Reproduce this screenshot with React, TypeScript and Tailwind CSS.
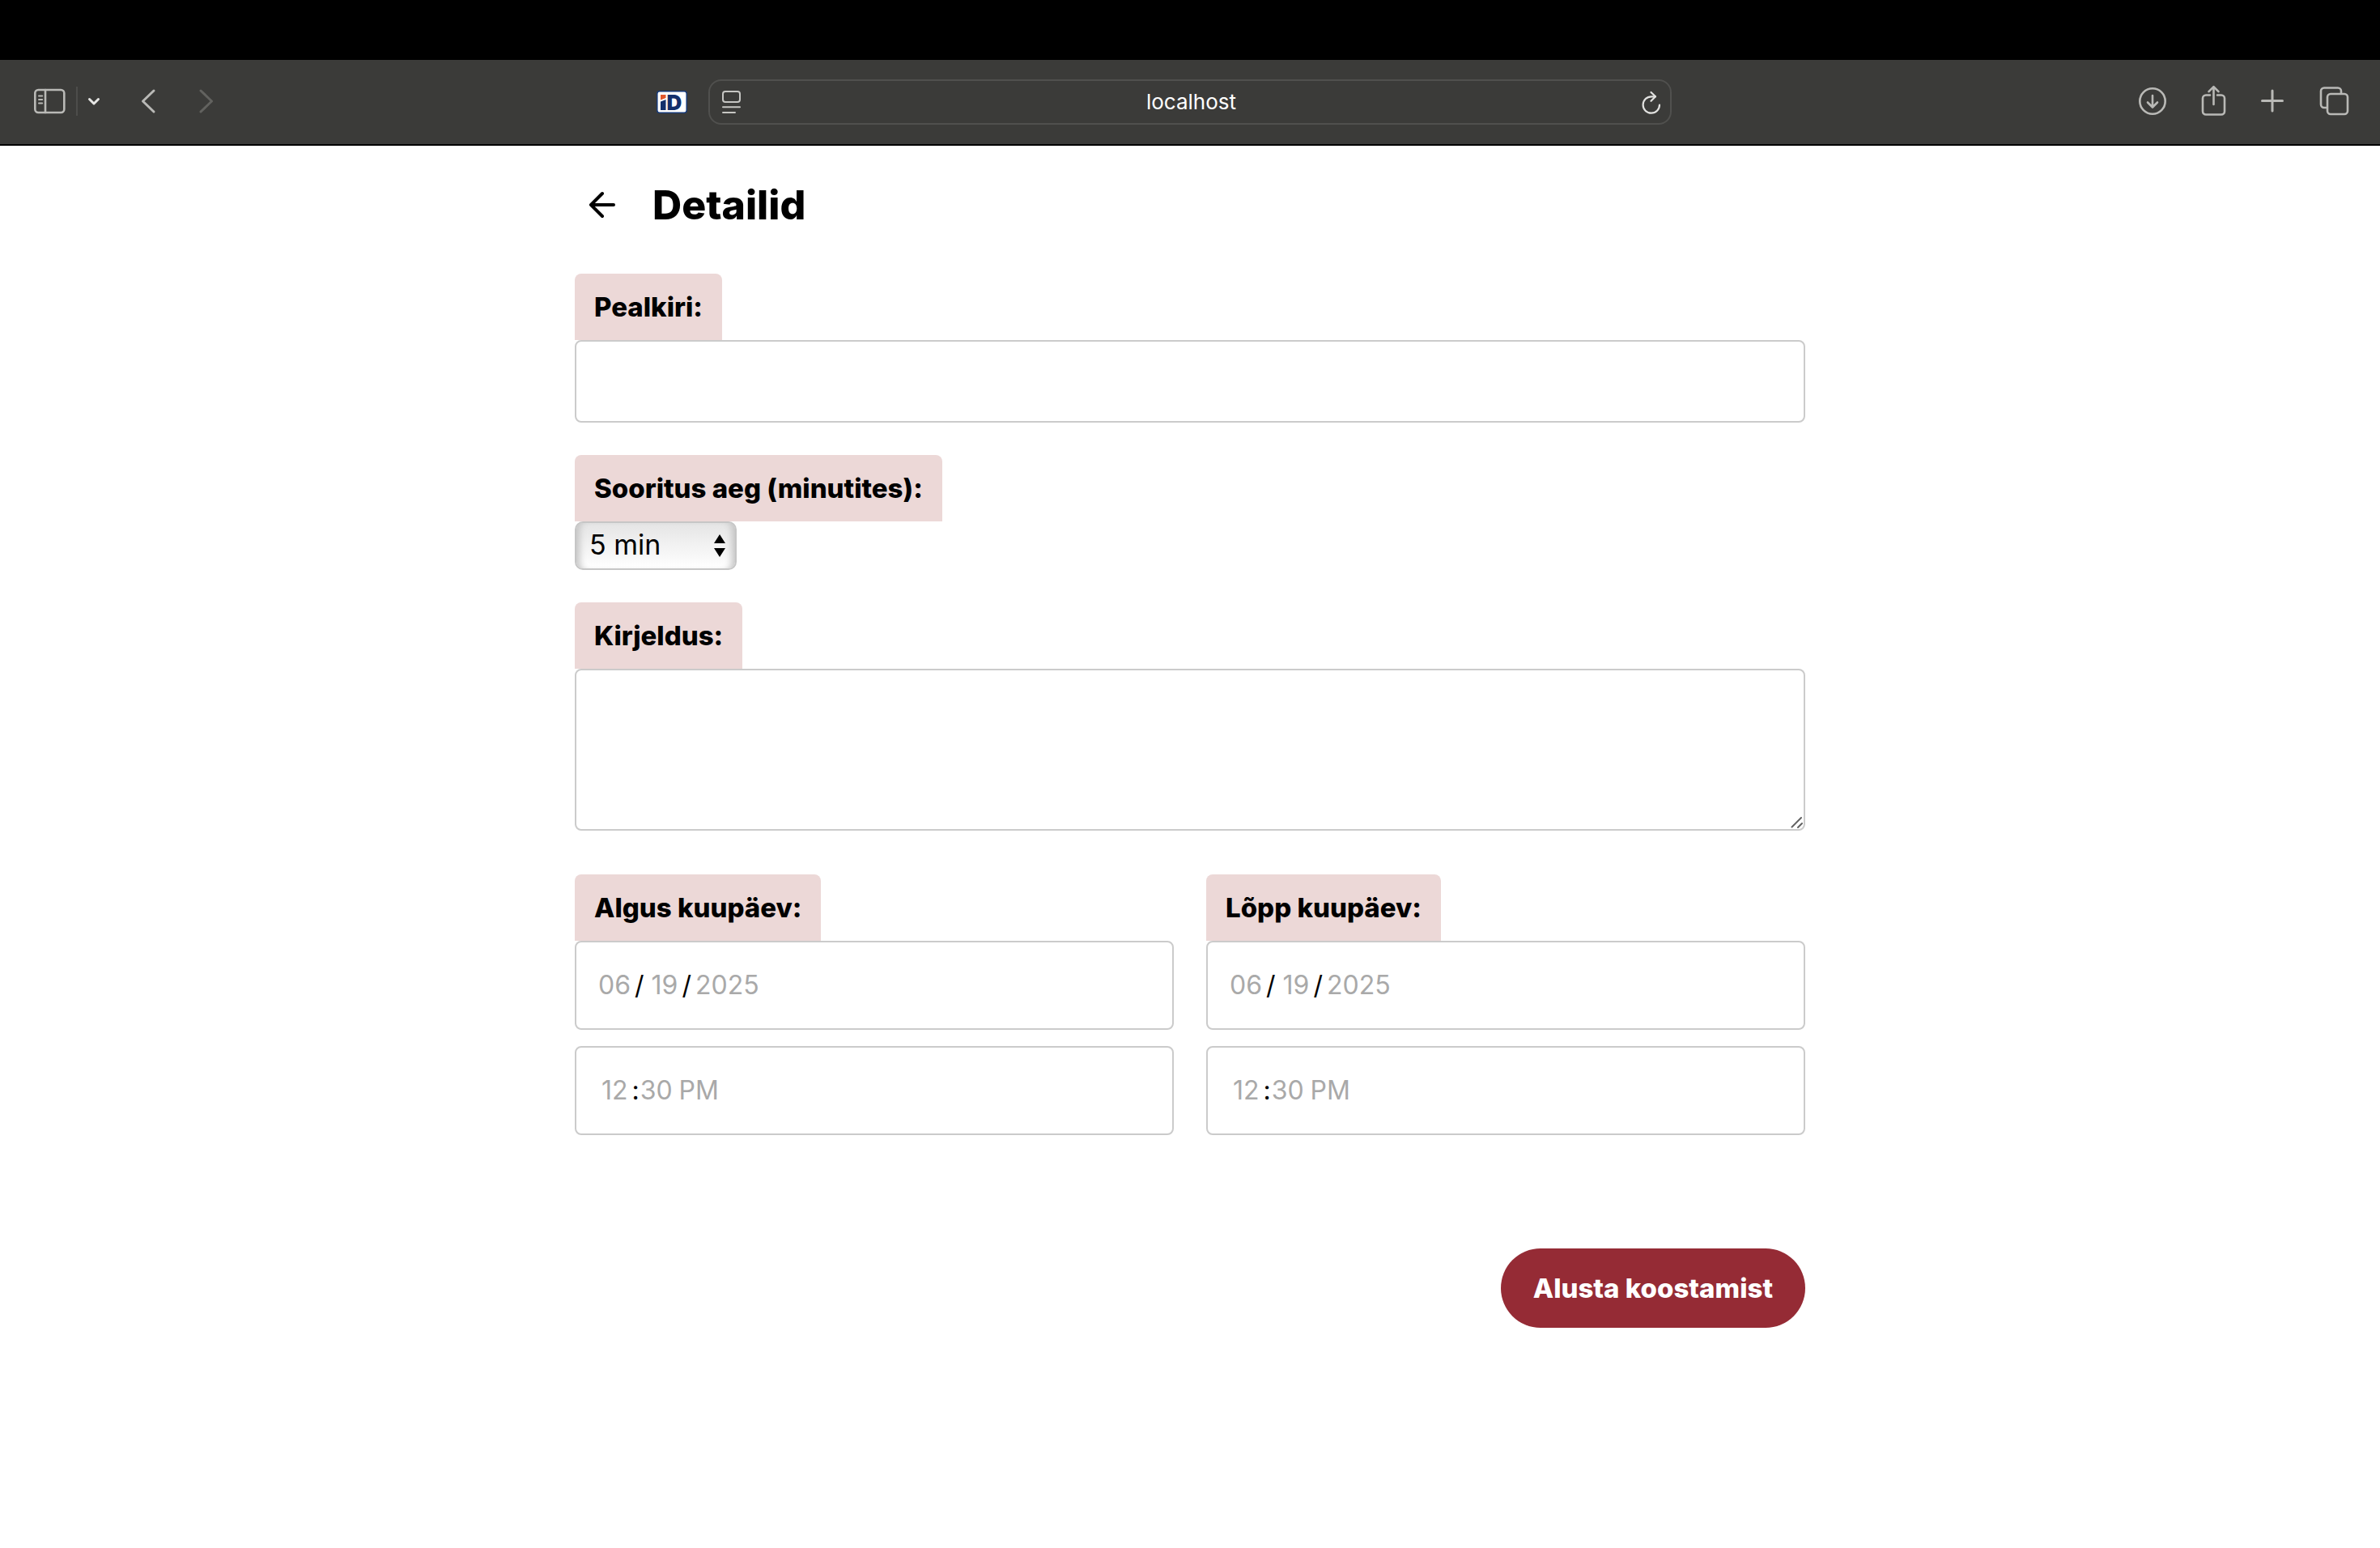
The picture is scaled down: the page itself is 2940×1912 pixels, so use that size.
import type { ReactNode } from "react";

const boxClass = "block w-full rounded-lg border-2 border-[#cbcbcb] bg-white text-[32px] text-black outline-none";

const dateTimeClass =
  "block h-[110px] w-full appearance-none rounded-lg border-2 border-[#cbcbcb] bg-white px-[26px] text-[32px] text-black outline-none " +
  "[&::-webkit-calendar-picker-indicator]:hidden " +
  "[&::-webkit-datetime-edit-month-field]:text-[#a9a9a9] [&::-webkit-datetime-edit-day-field]:text-[#a9a9a9] [&::-webkit-datetime-edit-year-field]:text-[#a9a9a9] " +
  "[&::-webkit-datetime-edit-hour-field]:text-[#a9a9a9] [&::-webkit-datetime-edit-minute-field]:text-[#a9a9a9] [&::-webkit-datetime-edit-ampm-field]:text-[#a9a9a9] " +
  "[&::-webkit-datetime-edit-month-field]:mr-1 [&::-webkit-datetime-edit-day-field]:ml-2 [&::-webkit-datetime-edit-day-field]:mr-1 [&::-webkit-datetime-edit-year-field]:ml-1 " +
  "[&::-webkit-datetime-edit-hour-field]:ml-1 [&::-webkit-datetime-edit-hour-field]:mr-1";

function FieldLabel({ htmlFor, children }: { htmlFor: string; children: ReactNode }) {
  return (
    <label
      htmlFor={htmlFor}
      className="block h-[82px] w-fit rounded-t-lg bg-[#ecd8d7] px-6 text-[33px] leading-[82px] font-extrabold whitespace-nowrap text-black"
    >
      {children}
    </label>
  );
}

function DateTimeGroup({ id, label, timeLabel }: { id: string; label: string; timeLabel: string }) {
  return (
    <div className="min-w-0 flex-1">
      <FieldLabel htmlFor={id}>{label}</FieldLabel>
      <input id={id} type="date" defaultValue="2025-06-19" className={dateTimeClass} />
      <input type="time" aria-label={timeLabel} defaultValue="12:30" className={`mt-5 ${dateTimeClass}`} />
    </div>
  );
}

function Toolbar() {
  return (
    <header className="flex h-[106px] items-center border-b-2 border-black bg-[#3b3b39] pb-px text-[#b9b9b6]">
      <div className="flex min-w-0 flex-1 items-center pb-0.5 pl-9">
        <button aria-label="Sidebar" className="ml-1">
          <svg width="42" height="36" viewBox="0 0 42 36" fill="none" stroke="currentColor" strokeWidth="2.6" strokeLinecap="round">
            <rect x="3.3" y="4" width="36" height="28" rx="4" />
            <path d="M16 4v28" />
            <path d="M8 11.5h4.200M8 16h4.200M8 20.500h4.200" strokeWidth="2" />
          </svg>
        </button>
        <span className="ml-3 h-9 w-0.5 bg-[#4d4d4b]" />
        <button aria-label="Sidebar options" className="ml-3 text-[#e6e6e4]">
          <svg width="16" height="36" viewBox="0 0 16 36" fill="none" stroke="currentColor" strokeWidth="3" strokeLinecap="round" strokeLinejoin="round">
            <path d="M2.500 15.500 8 21l5.500-5.500" />
          </svg>
        </button>
        <button aria-label="Back" className="ml-12">
          <svg width="24" height="36" viewBox="0 0 24 36" fill="none" stroke="currentColor" strokeWidth="3" strokeLinecap="round" strokeLinejoin="round">
            <path d="M18 5 4.500 18 18 31" />
          </svg>
        </button>
        <button aria-label="Forward" disabled className="ml-12 text-[#62625f]">
          <svg width="24" height="36" viewBox="0 0 24 36" fill="none" stroke="currentColor" strokeWidth="3" strokeLinecap="round" strokeLinejoin="round">
            <path d="M4 5 17.500 18 4 31" />
          </svg>
        </button>
        <button aria-label="iD" className="mr-[26px] ml-auto">
          <svg width="38" height="40" viewBox="0 -7 38 40" className="overflow-visible">
            <rect x="0.800" y="0.800" width="36.400" height="26.400" rx="3" fill="#fff" stroke="#173a78" strokeWidth="1.500" />
            <path d="M5 5h6.500v4L5 11.500z" fill="#e2572b" />
            <path d="M5 13.500 11.500 11v13H5z" fill="#14306b" />
            <text x="12.500" y="24" fontSize="26" fontWeight="900" fill="#14306b" fontFamily="Inter, sans-serif">D</text>
          </svg>
        </button>
      </div>
      <div className="flex h-14 w-[1190px] items-center justify-between rounded-2xl border-2 border-[#50504e] pr-2.5 pl-[13px]">
        <button aria-label="Reader" className="text-[#c6c6c3]">
          <svg width="27" height="32" viewBox="0 0 27 32" fill="none" stroke="currentColor" strokeWidth="2" strokeLinecap="round">
            <rect x="3" y="3" width="21" height="13" rx="3" />
            <path d="M3 22.200h21M3 29h15" />
          </svg>
        </button>
        <input aria-label="Address" defaultValue="localhost" className="min-w-0 flex-1 bg-transparent text-center text-[26px] leading-8 text-white outline-none" />
        <button aria-label="Reload" className="text-[#e2e2e0]">
          <svg width="27" height="32" viewBox="0 0 27 32" fill="none" stroke="currentColor" strokeWidth="2.200" strokeLinecap="round" strokeLinejoin="round">
            <path d="M24 19.500A10.200 10.200 0 1 1 13.800 9.300H19" />
            <path d="M13.500 4 19 9.300 13.500 14.800" />
          </svg>
        </button>
      </div>
      <div className="flex min-w-0 flex-1 items-center justify-end pr-9 pb-0.5">
        <button aria-label="Downloads">
          <svg width="38" height="40" viewBox="0 0 38 40" fill="none" stroke="currentColor" strokeWidth="2.600" strokeLinecap="round" strokeLinejoin="round">
            <circle cx="19" cy="20" r="15.700" />
            <path d="M19 13v14M13 21.500l6 6 6-6" />
          </svg>
        </button>
        <button aria-label="Share" className="ml-10">
          <svg width="34" height="40" viewBox="0 0 34 40" fill="none" stroke="currentColor" strokeWidth="2.600" strokeLinecap="round" strokeLinejoin="round">
            <path d="M12 12.500H7a4 4 0 0 0-4 4v16a4 4 0 0 0 4 4h19a4 4 0 0 0 4-4v-16a4 4 0 0 0-4-4h-5" />
            <path d="M16.500 24V2.500M10.500 8.200l6-6 6 6" />
          </svg>
        </button>
        <button aria-label="New tab" className="ml-10">
          <svg width="30" height="40" viewBox="0 0 30 40" fill="none" stroke="currentColor" strokeWidth="3" strokeLinecap="round">
            <path d="M15 7v25M2.500 19.500h25" />
          </svg>
        </button>
        <button aria-label="Tab overview" className="ml-[42px]">
          <svg width="40" height="40" viewBox="0 0 40 40" fill="none" stroke="currentColor" strokeWidth="2.600" strokeLinejoin="round">
            <rect x="11" y="11" width="25" height="25" rx="4" />
            <path d="M11 28H7a4 4 0 0 1-4-4V7.500a4 4 0 0 1 4-4h17a4 4 0 0 1 4 4V11" />
          </svg>
        </button>
      </div>
    </header>
  );
}

export default function App() {
  return (
    <div className="min-h-screen bg-white font-['Inter',sans-serif] text-black">
      <div className="h-[74px] bg-black" />
      <Toolbar />
      <main className="mx-auto max-w-[1520px] pt-10">
        <div className="flex h-[66px] items-center">
          <button aria-label="Tagasi" className="ml-4">
            <svg width="36" height="36" viewBox="0 0 36 36" fill="none" stroke="currentColor" strokeWidth="4" strokeLinecap="round" strokeLinejoin="round">
              <path d="M32 18H4M18 4 4 18l14 14" />
            </svg>
          </button>
          <h1 className="ml-11 text-[50px] leading-[66px] font-extrabold">Detailid</h1>
        </div>
        <form className="mt-[52px]">
          <FieldLabel htmlFor="title">Pealkiri:</FieldLabel>
          <input id="title" type="text" className={`h-[102px] px-6 ${boxClass}`} />

          <div className="mt-10">
            <FieldLabel htmlFor="duration">Sooritus aeg (minutites):</FieldLabel>
            <div className="relative w-[200px]">
              <select
                id="duration"
                className="block h-[60px] w-full appearance-none rounded-[10px] border-2 border-[#c6c6c6] bg-linear-to-b from-[#e5e5e5] to-white pb-0.5 pl-4 text-[34px] leading-[54px] text-black shadow-[inset_10px_0_8px_-6px_#c4c4c4,inset_-10px_0_8px_-6px_#c4c4c4] outline-none"
              >
                <option>5 min</option>
                <option>10 min</option>
                <option>15 min</option>
              </select>
              <svg className="pointer-events-none absolute top-4 right-[14px]" width="14" height="28" viewBox="0 0 14 28">
                <path d="M7 0l7 11H0zM7 28l7-11H0z" />
              </svg>
            </div>
          </div>

          <div className="mt-10">
            <FieldLabel htmlFor="description">Kirjeldus:</FieldLabel>
            <div className="relative">
              <textarea id="description" className={`h-[200px] resize-none p-6 ${boxClass}`} />
              <svg className="pointer-events-none absolute right-[3px] bottom-[3px]" width="15" height="15" viewBox="0 0 15 15" fill="none" stroke="#626262" strokeWidth="2" strokeLinecap="round">
                <path d="M1.500 13.500 13 2M9 14l5-5" />
              </svg>
            </div>
          </div>

          <div className="mt-[54px] flex gap-10">
            <DateTimeGroup id="start" label="Algus kuupäev:" timeLabel="Algus kellaaeg" />
            <DateTimeGroup id="end" label="Lõpp kuupäev:" timeLabel="Lõpp kellaaeg" />
          </div>

          <div className="mt-[140px] flex justify-end">
            <button type="button" className="h-[98px] rounded-full bg-[#952b35] px-10 text-[33px] leading-10 font-extrabold text-white">
              Alusta koostamist
            </button>
          </div>
        </form>
      </main>
    </div>
  );
}
